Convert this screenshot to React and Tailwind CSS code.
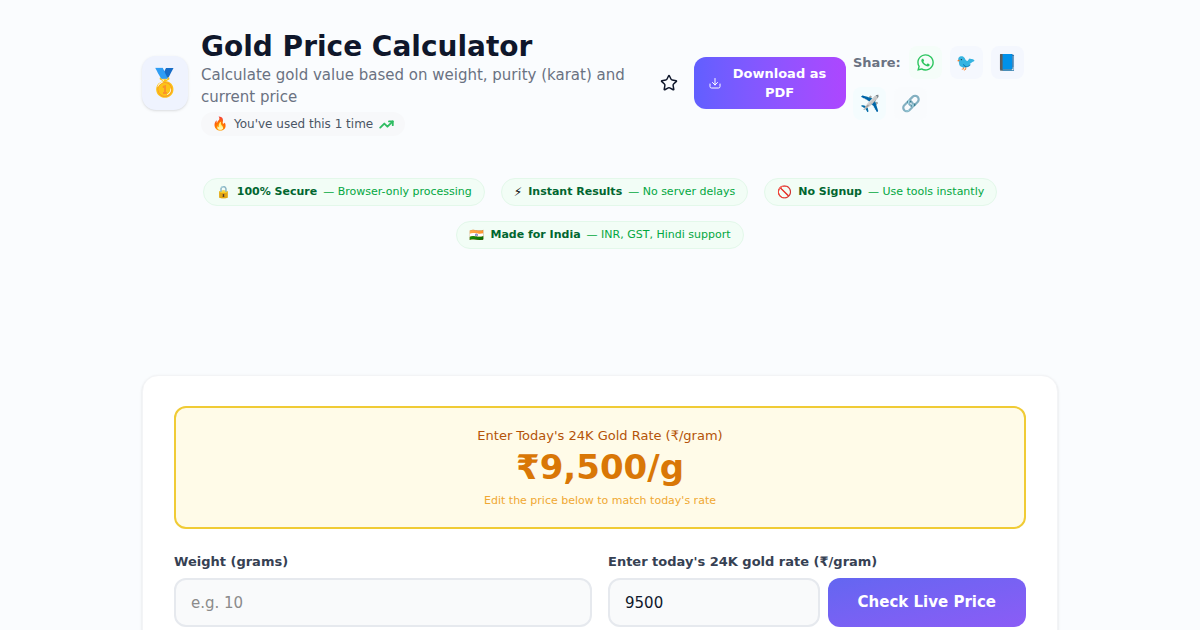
import React, { useState } from 'react';
import { Star, TrendingUp } from 'lucide-react';
import { FaWhatsapp } from 'react-icons/fa';

const TRUST_BADGES = [
  { icon: '🔒', title: '100% Secure', text: 'Browser-only processing' },
  { icon: '⚡', title: 'Instant Results', text: 'No server delays' },
  { icon: '🚫', title: 'No Signup', text: 'Use tools instantly' },
  { icon: '🇮🇳', title: 'Made for India', text: 'INR, GST, Hindi support' },
];

const SHARE_LINKS = [
  { label: 'WhatsApp', icon: <FaWhatsapp size={19} className="text-[#2cc55f]" />, className: 'bg-[#f5fdf9]' },
  { label: 'Twitter', icon: '🐦', className: 'bg-[#f5f8fe]' },
  { label: 'Facebook', icon: '📘', className: 'bg-[#f4f7fe]' },
  { label: 'Telegram', icon: '✈️', className: 'bg-[#f4fcfe]' },
  { label: 'Copy link', icon: '🔗', className: 'bg-[#f9fbfd]' },
];

const DownloadIcon = () => (
  <svg width="12" height="12" viewBox="0 0 24 24" fill="none" stroke="currentColor" strokeWidth="2" strokeLinecap="round" strokeLinejoin="round" className="shrink-0">
    <path d="M2 14v5a3 3 0 0 0 3 3h14a3 3 0 0 0 3-3v-5" />
    <path d="M7 11l5 5 5-5" />
    <path d="M12 16V3" />
  </svg>
);

const ShareBar = () => (
  <div className="flex min-w-0 flex-1 flex-wrap items-center gap-2">
    <span className="text-[13px] font-semibold text-gray-500">Share:</span>
    {SHARE_LINKS.map((link) => (
      <a
        key={link.label}
        href="#share"
        aria-label={link.label}
        className={`flex h-[33px] w-[33px] items-center justify-center rounded-lg text-base leading-none ${link.className}`}
      >
        {link.icon}
      </a>
    ))}
  </div>
);

const ToolHeader = () => (
  <header className="flex items-center">
    <div className="mr-[13px] flex h-[54px] w-[46px] shrink-0 items-center justify-center rounded-[14px] bg-[#eff3fe] text-[27px] shadow-sm">
      🥇
    </div>
    <div className="w-[451px] shrink-0">
      <h1 className="text-[28px] leading-[34px] font-extrabold text-slate-900">Gold Price Calculator</h1>
      <p className="text-[15px] leading-[22px] text-gray-500">
        Calculate gold value based on weight, purity (karat) and current price
      </p>
      <div className="mt-1 flex w-fit items-center gap-[6px] rounded-full bg-[#f7f8fa] px-[11px] py-1 text-xs leading-4 text-gray-600">
        <span className="text-[13px]">🔥</span>
        <span>You've used this 1 time</span>
        <TrendingUp size={15} strokeWidth={3} className="text-[#2fbd62]" />
      </div>
    </div>
    <button type="button" aria-label="Add to favorites" className="mr-2 shrink-0 p-2 text-slate-900">
      <Star size={18} />
    </button>
    <button
      type="button"
      className="mr-[7px] flex w-[152px] shrink-0 items-center rounded-xl bg-gradient-to-r from-[#615fff] to-[#ad46ff] px-[15px] py-[7px] text-white"
    >
      <DownloadIcon />
      <span className="flex-1 pl-[7px] text-center text-[13px] leading-[19px] font-semibold">Download as PDF</span>
    </button>
    <ShareBar />
  </header>
);

const TrustBadges = () => (
  <ul className="mt-[42px] flex flex-wrap justify-center gap-x-4 gap-y-[15px]">
    {TRUST_BADGES.map((badge) => (
      <li
        key={badge.title}
        className="flex items-center gap-[6px] rounded-full border border-[#e3f8ea] bg-[#f2fdf6] px-3 py-1 text-[11px] leading-[18px]"
      >
        <span className="text-xs leading-[18px]">{badge.icon}</span>
        <strong className="font-semibold text-green-800">{badge.title}</strong>
        <span className="text-green-600">— {badge.text}</span>
      </li>
    ))}
  </ul>
);

const inputClass =
  'h-[49px] w-full min-w-0 rounded-xl border-2 border-[#e6e9ee] bg-gray-50 px-[15px] text-[15px] text-slate-900 placeholder:text-[#8b8b8b] outline-none focus:border-indigo-400';

const GoldPriceCalculator = () => {
  const [weight, setWeight] = useState('');
  const [rate, setRate] = useState('9500');

  return (
    <section className="mt-[126px] rounded-2xl border border-gray-100 bg-white px-[31px] pt-[30px] pb-8 shadow-sm">
      <div className="rounded-xl border-2 border-[#f0cb35] bg-[#fffbe8] pt-4 pb-[17px] text-center">
        <p className="text-[13px] leading-6 text-[#b45309]">Enter Today's 24K Gold Rate (₹/gram)</p>
        <p className="text-[34px] leading-[38px] font-extrabold text-[#d97706]">
          ₹{Number(rate).toLocaleString('en-IN')}/g
        </p>
        <p className="mt-[6px] text-[11px] leading-[18px] text-[#f0a832]">Edit the price below to match today's rate</p>
      </div>

      <div className="mt-6 grid grid-cols-2 gap-4">
        <div>
          <label htmlFor="weight" className="mb-[7px] block text-[13px] leading-[18px] font-semibold text-gray-700">
            Weight (grams)
          </label>
          <input
            id="weight"
            type="text"
            inputMode="decimal"
            placeholder="e.g. 10"
            value={weight}
            onChange={(e) => setWeight(e.target.value)}
            className={inputClass}
          />
        </div>
        <div>
          <label htmlFor="rate" className="mb-[7px] block text-[13px] leading-[18px] font-semibold text-gray-700">
            Enter today's 24K gold rate (₹/gram)
          </label>
          <div className="flex gap-2">
            <input
              id="rate"
              type="text"
              inputMode="decimal"
              value={rate}
              onChange={(e) => setRate(e.target.value)}
              className={inputClass}
            />
            <button
              type="button"
              className="shrink-0 rounded-xl bg-gradient-to-br from-[#6366f1] to-[#8b5cf6] px-[30px] text-[15px] font-bold text-white"
            >
              Check Live Price
            </button>
          </div>
        </div>
      </div>
    </section>
  );
};

export default function App() {
  return (
    <div className="min-h-screen bg-[#fafcfe] font-['DejaVu_Sans',sans-serif]">
      <main className="mx-auto max-w-[916px] pt-[30px]">
        <ToolHeader />
        <TrustBadges />
        <GoldPriceCalculator />
      </main>
    </div>
  );
}
